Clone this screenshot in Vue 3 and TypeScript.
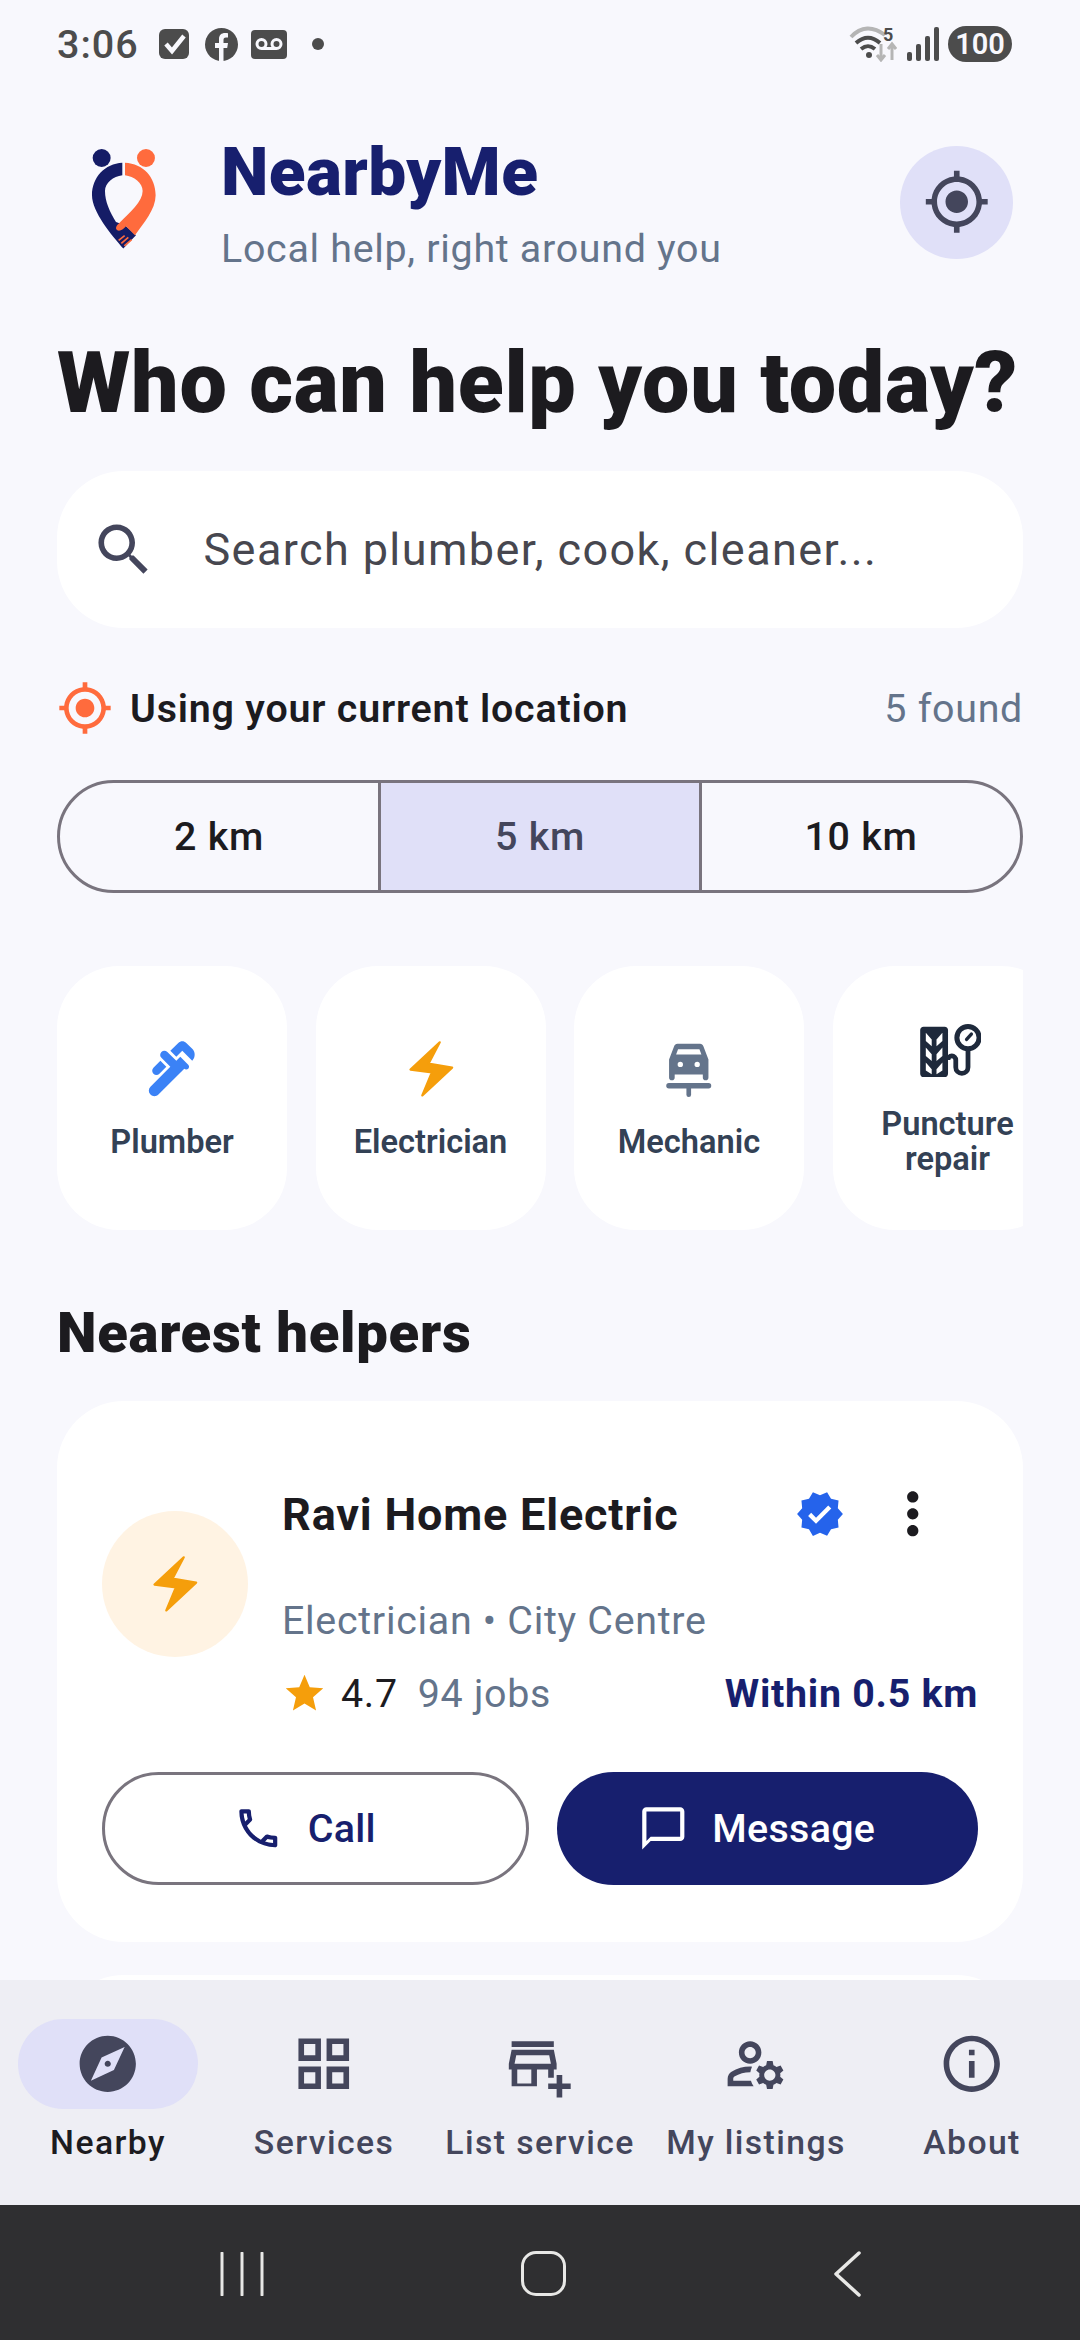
<template>
  <div class="page">
    <div class="status-bar">
      <span class="clock">3:06</span>
      <svg class="st-check" viewBox="0 0 30 30"><rect width="30" height="30" rx="6" fill="#4c4c4c" /><path d="M7 15l6 7L25 7" fill="none" stroke="#f8f8fd" stroke-width="4.5" /></svg>
      <svg class="st-fb" viewBox="0 0 33 33"><circle cx="16.5" cy="16.5" r="16.5" fill="#4c4c4c" /><path d="M14 33V20h-4v-5h4v-4c0-4 2.5-6 6-6 1.5 0 3 .2 3 .2V9.5h-2c-2 0-2.5 1.2-2.5 2.5v3h4.5l-.8 5h-3.7v13z" fill="#f8f8fd" /></svg>
      <svg class="st-vm" viewBox="0 0 36 29"><rect width="36" height="29" rx="4" fill="#4c4c4c" /><circle cx="10.5" cy="14" r="4.5" fill="none" stroke="#f8f8fd" stroke-width="3" /><circle cx="25.5" cy="14" r="4.5" fill="none" stroke="#f8f8fd" stroke-width="3" /><path d="M10.5 18.5h15" stroke="#f8f8fd" stroke-width="3" /></svg>
      <span class="st-dot"></span>
      <span class="st-space"></span>
      <svg class="st-wifi" viewBox="0 0 48 36">
        <path d="M2 11C12 0 24 0 36 9" fill="none" stroke="#b5b5b5" stroke-width="4" />
        <path d="M7 17c8-7 16-7 24 0" fill="none" stroke="#4c4c4c" stroke-width="4" />
        <path d="M12 23c5-4 9-4 14 0" fill="none" stroke="#4c4c4c" stroke-width="4" />
        <circle cx="20" cy="29" r="3" fill="#4c4c4c" />
        <path d="M32 18v16m-4-5l4 5 4-5" fill="none" stroke="#b5b5b5" stroke-width="3" />
        <path d="M43 34V18m-4 5l4-5 4 5" fill="none" stroke="#b5b5b5" stroke-width="3" />
      </svg>
      <span class="st-five">5</span>
      <svg class="st-signal" viewBox="0 0 32 34"><g fill="#4c4c4c"><rect x="0" y="25" width="5" height="9" rx="2" /><rect x="9" y="17" width="5" height="17" rx="2" /><rect x="18" y="9" width="5" height="25" rx="2" /><rect x="27" y="0" width="5" height="34" rx="2" /></g></svg>
      <span class="st-battery">100</span>
    </div>

    <div class="content">
      <header class="brand">
        <svg class="logo" viewBox="90 80 205 310">
          <circle cx="125" cy="113" r="27" fill="#151c66" />
          <circle cx="258" cy="113" r="27" fill="#ff6b3d" />
          <path d="M187 127C135 130 96 170 96 225C96 275 155 345 190 385L228 345L195 315L168 305C150 275 135 245 135 212C135 188 160 168 187 165Z" fill="#151c66" />
          <path d="M195 127C250 130 287 170 287 225C287 268 250 310 225 345L198 318C192 325 180 335 172 330C164 324 170 315 178 308C210 275 248 245 248 212C248 188 222 168 195 165Z" fill="#ff6b3d" />
          <path d="M176 360L194 346M184 369L205 351M193 377L215 358" stroke="#ff6b3d" stroke-width="5" fill="none" />
        </svg>
        <div class="brand-text">
          <div class="brand-name">NearbyMe</div>
          <div class="brand-sub">Local help, right around you</div>
        </div>
        <button class="locate-btn">
          <svg class="icon-24" viewBox="0 0 24 24"><path :d="icons.location" fill="#44465c" /></svg>
        </button>
      </header>

      <h1 class="headline">Who can help you today?</h1>

      <div class="search">
        <svg class="icon-24" viewBox="0 0 24 24"><path :d="icons.search" fill="#44465c" /></svg>
        <span class="search-text">Search plumber, cook, cleaner...</span>
      </div>

      <div class="location-row">
        <svg class="loc-icon" viewBox="0 0 24 24"><path :d="icons.location" fill="#ff6b3d" /></svg>
        <span class="loc-label">Using your current location</span>
        <span class="loc-count">5 found</span>
      </div>

      <div class="segments">
        <div v-for="d in distances" :key="d" class="segment" :class="{ active: d === '5 km' }">{{ d }}</div>
      </div>

      <div class="rail">
        <div v-for="s in services" :key="s.label" class="service">
          <svg class="icon-24" viewBox="0 0 24 24">
            <template v-if="s.label === 'Mechanic'">
              <path :d="icons.car" fill-rule="evenodd" :fill="s.color" />
              <rect x="4" y="17.1" width="16" height="1.9" rx="0.95" :fill="s.color" />
              <rect x="11.17" y="18" width="1.66" height="4" rx="0.8" :fill="s.color" />
            </template>
            <template v-else-if="s.label === 'Puncture repair'">
              <path :d="icons.tyre" fill-rule="evenodd" :fill="s.color" />
              <circle cx="19.2" cy="7" r="3.95" fill="none" :stroke="s.color" stroke-width="1.8" />
              <path d="M18.7 7.6l1.7-1.9" :stroke="s.color" stroke-width="1.2" stroke-linecap="round" />
              <path d="M19.2 10.5v7a2.17 2.17 0 0 1-4.35 0v-2.6a1.4 1.4 0 0 0-2.8 0" fill="none" :stroke="s.color" stroke-width="1.7" />
            </template>
            <path v-else-if="s.label === 'Electrician'" :d="icons.bolt" :fill="s.color" :stroke="s.color" stroke-width="0.8" stroke-linejoin="round" />
            <path v-else :d="s.path" :fill="s.color" />
          </svg>
          <span class="service-label">{{ s.label }}</span>
        </div>
      </div>

      <h2 class="section-title">Nearest helpers</h2>

      <div class="helper">
        <div class="helper-top">
          <div class="avatar">
            <svg class="icon-24" viewBox="0 0 24 24"><path :d="icons.bolt" fill="#f59e0b" stroke="#f59e0b" stroke-width="0.8" stroke-linejoin="round" /></svg>
          </div>
          <div class="helper-info">
            <div class="helper-head">
              <span class="helper-name">Ravi Home Electric</span>
              <svg class="verified" viewBox="0 0 24 24"><path :d="icons.verified" fill="#2563eb" /></svg>
              <svg class="icon-24 more" viewBox="0 0 24 24"><path :d="icons.more" fill="#1c1b1f" /></svg>
            </div>
            <div class="helper-sub">Electrician • City Centre</div>
            <div class="helper-meta">
              <svg class="star" viewBox="0 0 24 24"><path :d="icons.star" fill="#f59e0b" /></svg>
              <span class="rating">4.7</span>
              <span class="jobs">94 jobs</span>
              <span class="within">Within 0.5 km</span>
            </div>
          </div>
        </div>
        <div class="actions">
          <button class="btn btn-outline">
            <svg class="btn-icon" viewBox="0 0 24 24"><path :d="icons.call" fill="#171f6e" /></svg>
            Call
          </button>
          <button class="btn btn-solid">
            <svg class="btn-icon" viewBox="0 0 24 24"><path :d="icons.chat" fill="#fff" /></svg>
            Message
          </button>
        </div>
      </div>
      <div class="helper-peek"></div>
    </div>

    <nav class="bottom-nav">
      <div v-for="(n, i) in navItems" :key="n.label" class="nav-item" :class="{ active: i === 0 }">
        <div class="nav-pill">
          <svg class="icon-24" viewBox="0 0 24 24"><path :d="n.path" fill="#44465c" /></svg>
        </div>
        <span class="nav-label">{{ n.label }}</span>
      </div>
    </nav>

    <div class="system-nav">
      <svg class="sys-recent" viewBox="0 0 44 44"><path d="M2 1v42M22 1v42M42 1v42" stroke="#e8e8e6" stroke-width="3" stroke-linecap="round" /></svg>
      <span class="sys-home"></span>
      <svg class="sys-back" viewBox="0 0 28 46"><path d="M26 2L3 23l23 21" fill="none" stroke="#e8e8e6" stroke-width="3.5" stroke-linecap="round" stroke-linejoin="round" /></svg>
    </div>
  </div>
</template>

<script setup lang="ts">
const icons = {
  location: 'M12 8c-2.21 0-4 1.79-4 4s1.79 4 4 4 4-1.79 4-4-1.79-4-4-4zm8.94 3c-.46-4.17-3.77-7.48-7.94-7.94V1h-2v2.06C6.83 3.52 3.52 6.83 3.06 11H1v2h2.06c.46 4.17 3.77 7.48 7.94 7.94V23h2v-2.06c4.17-.46 7.48-3.77 7.94-7.94H23v-2h-2.06zM12 19c-3.87 0-7-3.13-7-7s3.13-7 7-7 7 3.13 7 7-3.13 7-7 7z',
  search: 'M15.5 14h-.79l-.28-.27C15.41 12.59 16 11.11 16 9.5 16 5.91 13.09 3 9.5 3S3 5.91 3 9.5 5.91 16 9.5 16c1.61 0 3.09-.59 4.23-1.57l.27.28v.79l5 4.99L20.49 19l-4.99-5zm-6 0C7.01 14 5 11.99 5 9.5S7.01 5 9.5 5 14 7.01 14 9.5 11.99 14 9.5 14z',
  bolt: 'M15.2 2.6L4.8 12.3L12.4 13.3L9 21.5L19.6 11.6L11.2 10.2Z',
  car: 'M8 3.1h8c.6 0 1 .3 1.2.9L19 8.7v6.4a1 1 0 0 1-2 0V14H7v1.1a1 1 0 0 1-2 0V8.7l1.8-4.7c.2-.6.6-.9 1.2-.9zM8.2 5.1L7.5 6.9h9l-.7-1.8zM9 9.5a.95.95 0 1 0 0 1.9.95.95 0 0 0 0-1.9zM15 9.5a.95.95 0 1 0 0 1.9.95.95 0 0 0 0-1.9z',
  tyre: 'M3.4 3.1h7.5c.7 0 1.2.5 1.2 1.2v15.5c0 .7-.5 1.2-1.2 1.2H3.4c-.7 0-1.2-.5-1.2-1.2V4.3c0-.7.5-1.2 1.2-1.2zM4.2 5.2l2.1 2.4V10L4.2 8.2zM10.1 5.2L8 7.6V10l2.1-1.8zM4.2 10.5l2.1 2.4v2.4l-2.1-1.8zM10.1 10.5L8 12.9v2.4l2.1-1.8zM4.2 15.8l2.1 2.4V20l-2.1-1.3zM10.1 15.8L8 18.2V20l2.1-1.3z',
  verified: 'M23 12l-2.44-2.79.34-3.69-3.61-.82-1.89-3.2L12 2.96 8.6 1.5 6.71 4.69 3.1 5.5l.34 3.7L1 12l2.44 2.79-.34 3.7 3.61.82L8.6 22.5l3.4-1.47 3.4 1.46 1.89-3.19 3.61-.82-.34-3.69L23 12zm-12.91 4.72l-3.8-3.81 1.48-1.48 2.32 2.33 5.85-5.87 1.48 1.48-7.33 7.35z',
  more: 'M12 8c1.1 0 2-.9 2-2s-.9-2-2-2-2 .9-2 2 .9 2 2 2zm0 2c-1.1 0-2 .9-2 2s.9 2 2 2 2-.9 2-2-.9-2-2-2zm0 6c-1.1 0-2 .9-2 2s.9 2 2 2 2-.9 2-2-.9-2-2-2z',
  star: 'M12 17.27L18.18 21l-1.64-7.03L22 9.24l-7.19-.61L12 2 9.19 8.63 2 9.24l5.46 4.73L5.82 21z',
  call: 'M6.54 5c.06.89.21 1.76.45 2.59l-1.2 1.2c-.41-1.2-.67-2.47-.76-3.79h1.51m9.86 12.02c.85.24 1.72.39 2.6.45v1.49c-1.32-.09-2.59-.35-3.8-.75l1.2-1.19M7.5 3H4c-.55 0-1 .45-1 1 0 9.39 7.61 17 17 17 .55 0 1-.45 1-1v-3.49c0-.55-.45-1-1-1-1.24 0-2.45-.2-3.57-.57-.1-.04-.21-.05-.31-.05-.26 0-.51.1-.71.29l-2.2 2.2c-2.83-1.45-5.15-3.76-6.59-6.59l2.2-2.2c.28-.28.36-.67.25-1.02C8.7 6.45 8.5 5.25 8.5 4c0-.55-.45-1-1-1z',
  chat: 'M20 2H4c-1.1 0-2 .9-2 2v18l4-4h14c1.1 0 2-.9 2-2V4c0-1.1-.9-2-2-2zm0 14H6l-2 2V4h16v12z',
}

const distances = ['2 km', '5 km', '10 km']

const services = [
  {
    label: 'Plumber',
    color: '#3b82f6',
    path: 'M19.28 4.93l-2.12-2.12c-.78-.78-2.05-.78-2.83 0L11.5 5.64l2.12 2.12 2.12-2.12 3.54 3.54c1.17-1.18 1.17-3.08 0-4.25zM5.49 13.77c.59.59 1.54.59 2.12 0l2.47-2.47-2.12-2.13-2.47 2.47c-.59.59-.59 1.54 0 2.13zM15.04 7.76l-.71.71-.71.71-3.18-3.18c-.59-.59-1.54-.59-2.12 0-.59.59-.59 1.54 0 2.12l3.18 3.18-.71.7-6.36 6.36c-.78.78-.78 2.05 0 2.83.78.78 2.05.78 2.83 0L16.45 12c.39.39 1.02.39 1.41 0 .39-.39.39-1.02 0-1.41l-2.82-2.83z',
  },
  { label: 'Electrician', color: '#f59e0b', path: '' },
  { label: 'Mechanic', color: '#64748b', path: '' },
  { label: 'Puncture repair', color: '#1e293b', path: '' },
]

const navItems = [
  {
    label: 'Nearby',
    path: 'M12 10.9c-.61 0-1.1.49-1.1 1.1s.49 1.1 1.1 1.1c.61 0 1.1-.49 1.1-1.1s-.49-1.1-1.1-1.1zM12 2C6.48 2 2 6.48 2 12s4.48 10 10 10 10-4.48 10-10S17.52 2 12 2zm2.19 12.19L6 18l3.81-8.19L18 6l-3.81 8.19z',
  },
  {
    label: 'Services',
    path: 'M3 3v8h8V3H3zm6 6H5V5h4v4zm-6 4v8h8v-8H3zm6 6H5v-4h4v4zm4-16v8h8V3h-8zm6 6h-4V5h4v4zm-6 4v8h8v-8h-8zm6 6h-4v-4h4v4z',
  },
  {
    label: 'List service',
    path: 'M15 17h2v-3h1v-2l-1-5H2l-1 5v2h1v6h9v-6h4v3zm-6 2H4v-5h5v5zM3.04 12l.6-3h11.72l.6 3H3.04zM2 4h15v2H2zm18 12v3h3v2h-3v3h-2v-3h-3v-2h3v-3h2z',
  },
  {
    label: 'My listings',
    path: 'M4 18v-.65c0-.34.16-.66.41-.81C6.1 15.53 8.03 15 10 15c.03 0 .05 0 .08.01.1-.7.3-1.37.59-1.98-.22-.02-.44-.03-.67-.03-2.42 0-4.68.67-6.61 1.82-.88.52-1.39 1.5-1.39 2.53V20h9.26c-.42-.6-.75-1.28-.97-2H4zm6-6c2.21 0 4-1.79 4-4s-1.79-4-4-4-4 1.79-4 4 1.79 4 4 4zm0-6c1.1 0 2 .9 2 2s-.9 2-2 2-2-.9-2-2 .9-2 2-2zm10.75 10c0-.22-.03-.42-.06-.63l1.14-1.01-1-1.73-1.45.49c-.32-.27-.68-.48-1.08-.63L18 11h-2l-.3 1.49c-.4.15-.76.36-1.08.63l-1.45-.49-1 1.73 1.14 1.01c-.03.21-.06.41-.06.63s.03.42.06.63l-1.14 1.01 1 1.73 1.45-.49c.32.27.68.48 1.08.63L16 21h2l.3-1.49c.4-.15.76-.36 1.08-.63l1.45.49 1-1.73-1.14-1.01c.03-.21.06-.41.06-.63zM17 18c-1.1 0-2-.9-2-2s.9-2 2-2 2 .9 2 2-.9 2-2 2z',
  },
  {
    label: 'About',
    path: 'M11 7h2v2h-2zm0 4h2v6h-2zm1-9C6.48 2 2 6.48 2 12s4.48 10 10 10 10-4.48 10-10S17.52 2 12 2zm0 18c-4.41 0-8-3.59-8-8s3.59-8 8-8 8 3.59 8 8-3.59 8-8 8z',
  },
]
</script>

<style>
html,
body {
  margin: 0;
  background: #f8f8fd;
}
</style>

<style scoped>
.page {
  width: 1080px;
  height: 2340px;
  display: flex;
  flex-direction: column;
  overflow: hidden;
  background: #f8f8fd;
  font-family: Roboto, "Liberation Sans", sans-serif;
  color: #1c1b1f;
}

.icon-24 {
  width: 67.5px;
  height: 67.5px;
  flex-shrink: 0;
}

/* status bar */
.status-bar {
  height: 88px;
  flex-shrink: 0;
  display: flex;
  align-items: center;
  padding: 0 68px 0 57px;
  box-sizing: border-box;
}

.clock {
  font-size: 39.5px;
  font-weight: 500;
  color: #4c4c4c;
  width: 102px;
  letter-spacing: 1px;
}

.st-check {
  width: 30px;
  height: 30px;
}

.st-fb {
  width: 33px;
  height: 33px;
  margin-left: 16px;
}

.st-vm {
  width: 36px;
  height: 29px;
  margin-left: 13px;
}

.st-dot {
  width: 12px;
  height: 12px;
  border-radius: 50%;
  background: #4c4c4c;
  margin-left: 25px;
}

.st-space {
  flex: 1;
}

.st-wifi {
  width: 48px;
  height: 36px;
}

.st-five {
  font-size: 18px;
  font-weight: 700;
  color: #4c4c4c;
  margin: -20px 0 0 -14px;
  width: 14px;
}

.st-signal {
  width: 32px;
  height: 34px;
  margin-left: 10px;
}

.st-battery {
  width: 64px;
  height: 36px;
  margin-left: 9px;
  border-radius: 18px;
  background: #4c4c4c;
  color: #f8f8fd;
  font-size: 29px;
  font-weight: 600;
  line-height: 36px;
  text-align: center;
}

/* main scroll area */
.content {
  flex: 1;
  min-height: 0;
  overflow: hidden;
  padding: 0 57px;
}

.brand {
  display: flex;
  align-items: center;
  margin-top: 42px;
}

.logo {
  width: 68.3px;
  height: 103.3px;
  margin: 0 62.7px 6px 33px;
  flex-shrink: 0;
}

.brand-text {
  flex: 1;
}

.brand-name {
  font-size: 67.5px;
  line-height: 84px;
  font-weight: 900;
  letter-spacing: 0.4px;
  color: #171f6e;
}

.brand-sub {
  font-size: 39.4px;
  line-height: 50px;
  margin-top: 10px;
  letter-spacing: 0.7px;
  color: #64748b;
}

.locate-btn {
  width: 113px;
  height: 113px;
  margin-right: 10px;
  border: none;
  border-radius: 50%;
  background: #e0e0f8;
  padding: 0;
  display: flex;
  align-items: center;
  justify-content: center;
}

.headline {
  margin: 60px 0 0;
  font-size: 84.4px;
  line-height: 100px;
  font-weight: 900;
  letter-spacing: 0.7px;
  color: #1c1b1f;
  white-space: nowrap;
}

.search {
  margin-top: 37px;
  height: 157px;
  border-radius: 67px;
  background: #fff;
  display: flex;
  align-items: center;
  padding-left: 33px;
  gap: 46px;
}

.search-text {
  font-size: 45px;
  letter-spacing: 1.4px;
  color: #47474f;
}

.location-row {
  margin-top: 50px;
  height: 60px;
  display: flex;
  align-items: center;
}

.loc-icon {
  width: 56px;
  height: 56px;
  margin-right: 17px;
}

.loc-label {
  flex: 1;
  font-size: 39.4px;
  font-weight: 600;
  letter-spacing: 0.8px;
}

.loc-count {
  font-size: 39.4px;
  letter-spacing: 0.7px;
  color: #64748b;
}

.segments {
  margin-top: 41.5px;
  height: 113px;
  box-sizing: border-box;
  border: 3px solid #79747e;
  border-radius: 57px;
  display: flex;
  overflow: hidden;
}

.segment {
  flex: 1;
  display: flex;
  align-items: center;
  justify-content: center;
  font-size: 39.4px;
  font-weight: 500;
  letter-spacing: 0.7px;
}

.segment + .segment {
  border-left: 3px solid #79747e;
}

.segment.active {
  background: #e0e0f8;
  color: #44465c;
}

.rail {
  margin-top: 73px;
  display: flex;
  gap: 28.5px;
  overflow: hidden;
}

.service {
  flex: 0 0 230px;
  height: 264px;
  box-sizing: border-box;
  border-radius: 62px;
  background: #fff;
  display: flex;
  flex-direction: column;
  align-items: center;
  justify-content: center;
  gap: 22px;
}

.service-label {
  font-size: 32.6px;
  line-height: 35px;
  font-weight: 600;
  color: #334155;
  text-align: center;
  width: 180px;
}

.section-title {
  margin: 68px 0 0;
  font-size: 56.25px;
  line-height: 70px;
  font-weight: 900;
  letter-spacing: 0.7px;
}

.helper {
  margin-top: 33px;
  height: 541px;
  box-sizing: border-box;
  border-radius: 67px;
  background: #fff;
  padding: 0 45px;
}

.helper-top {
  display: flex;
  height: 371px;
}

.avatar {
  width: 146px;
  height: 146px;
  margin-top: 110px;
  border-radius: 50%;
  background: #fff3e3;
  display: flex;
  align-items: center;
  justify-content: center;
  flex-shrink: 0;
}

.helper-info {
  flex: 1;
  margin-left: 34px;
  padding-top: 80px;
}

.helper-head {
  display: flex;
  align-items: center;
  height: 67px;
}

.helper-name {
  flex: 1;
  font-size: 45px;
  font-weight: 700;
  letter-spacing: 0.8px;
}

.verified {
  width: 50px;
  height: 50px;
  margin-right: 34px;
}

.more {
  margin-right: 32px;
}

.helper-sub {
  margin-top: 48px;
  height: 50px;
  line-height: 50px;
  font-size: 39.4px;
  letter-spacing: 0.7px;
  color: #64748b;
}

.helper-meta {
  margin-top: 23px;
  height: 50px;
  display: flex;
  align-items: center;
}

.star {
  width: 45px;
  height: 45px;
  margin-right: 14px;
}

.rating {
  font-size: 39.4px;
  letter-spacing: 0.7px;
  margin-right: 20px;
}

.jobs {
  flex: 1;
  font-size: 39.4px;
  letter-spacing: 0.7px;
  color: #64748b;
}

.within {
  font-size: 39.4px;
  font-weight: 700;
  letter-spacing: 0.7px;
  color: #171f6e;
}

.actions {
  display: flex;
  gap: 28px;
}

.btn {
  flex: 1;
  height: 113px;
  box-sizing: border-box;
  border-radius: 57px;
  display: flex;
  align-items: center;
  justify-content: center;
  gap: 24px;
  font-family: inherit;
  font-size: 39.4px;
  font-weight: 500;
  letter-spacing: 0.3px;
  padding: 0 22px 0 0;
}

.btn-outline {
  border: 3px solid #79747e;
  background: #fff;
  color: #171f6e;
}

.btn-solid {
  border: none;
  background: #171f6e;
  color: #fff;
}

.btn-icon {
  width: 50.6px;
  height: 50.6px;
}

.helper-peek {
  margin-top: 33px;
  height: 300px;
  border-radius: 67px;
  background: #fff;
}

/* bottom navigation */
.bottom-nav {
  height: 225px;
  flex-shrink: 0;
  background: #eeeef4;
  display: grid;
  grid-template-columns: repeat(5, 1fr);
}

.nav-item {
  display: flex;
  flex-direction: column;
  align-items: center;
  padding-top: 39px;
}

.nav-pill {
  width: 180px;
  height: 90px;
  border-radius: 45px;
  display: flex;
  align-items: center;
  justify-content: center;
}

.nav-item.active .nav-pill {
  background: #e0e0f8;
}

.nav-label {
  margin-top: 14px;
  font-size: 33.75px;
  line-height: 40px;
  font-weight: 500;
  letter-spacing: 1.4px;
  color: #44465c;
  white-space: nowrap;
}

.nav-item.active .nav-label {
  color: #1c1b1f;
}

/* android buttons */
.system-nav {
  height: 135px;
  flex-shrink: 0;
  background: #2f2f31;
  display: flex;
  align-items: center;
  padding-top: 2px;
  box-sizing: border-box;
}

.sys-recent {
  width: 44px;
  height: 44px;
  margin-left: 220px;
}

.sys-home {
  width: 45px;
  height: 45px;
  box-sizing: border-box;
  border: 3.5px solid #e8e8e6;
  border-radius: 15px;
  margin-left: 257px;
}

.sys-back {
  width: 28px;
  height: 46px;
  margin-left: 267px;
}
</style>
